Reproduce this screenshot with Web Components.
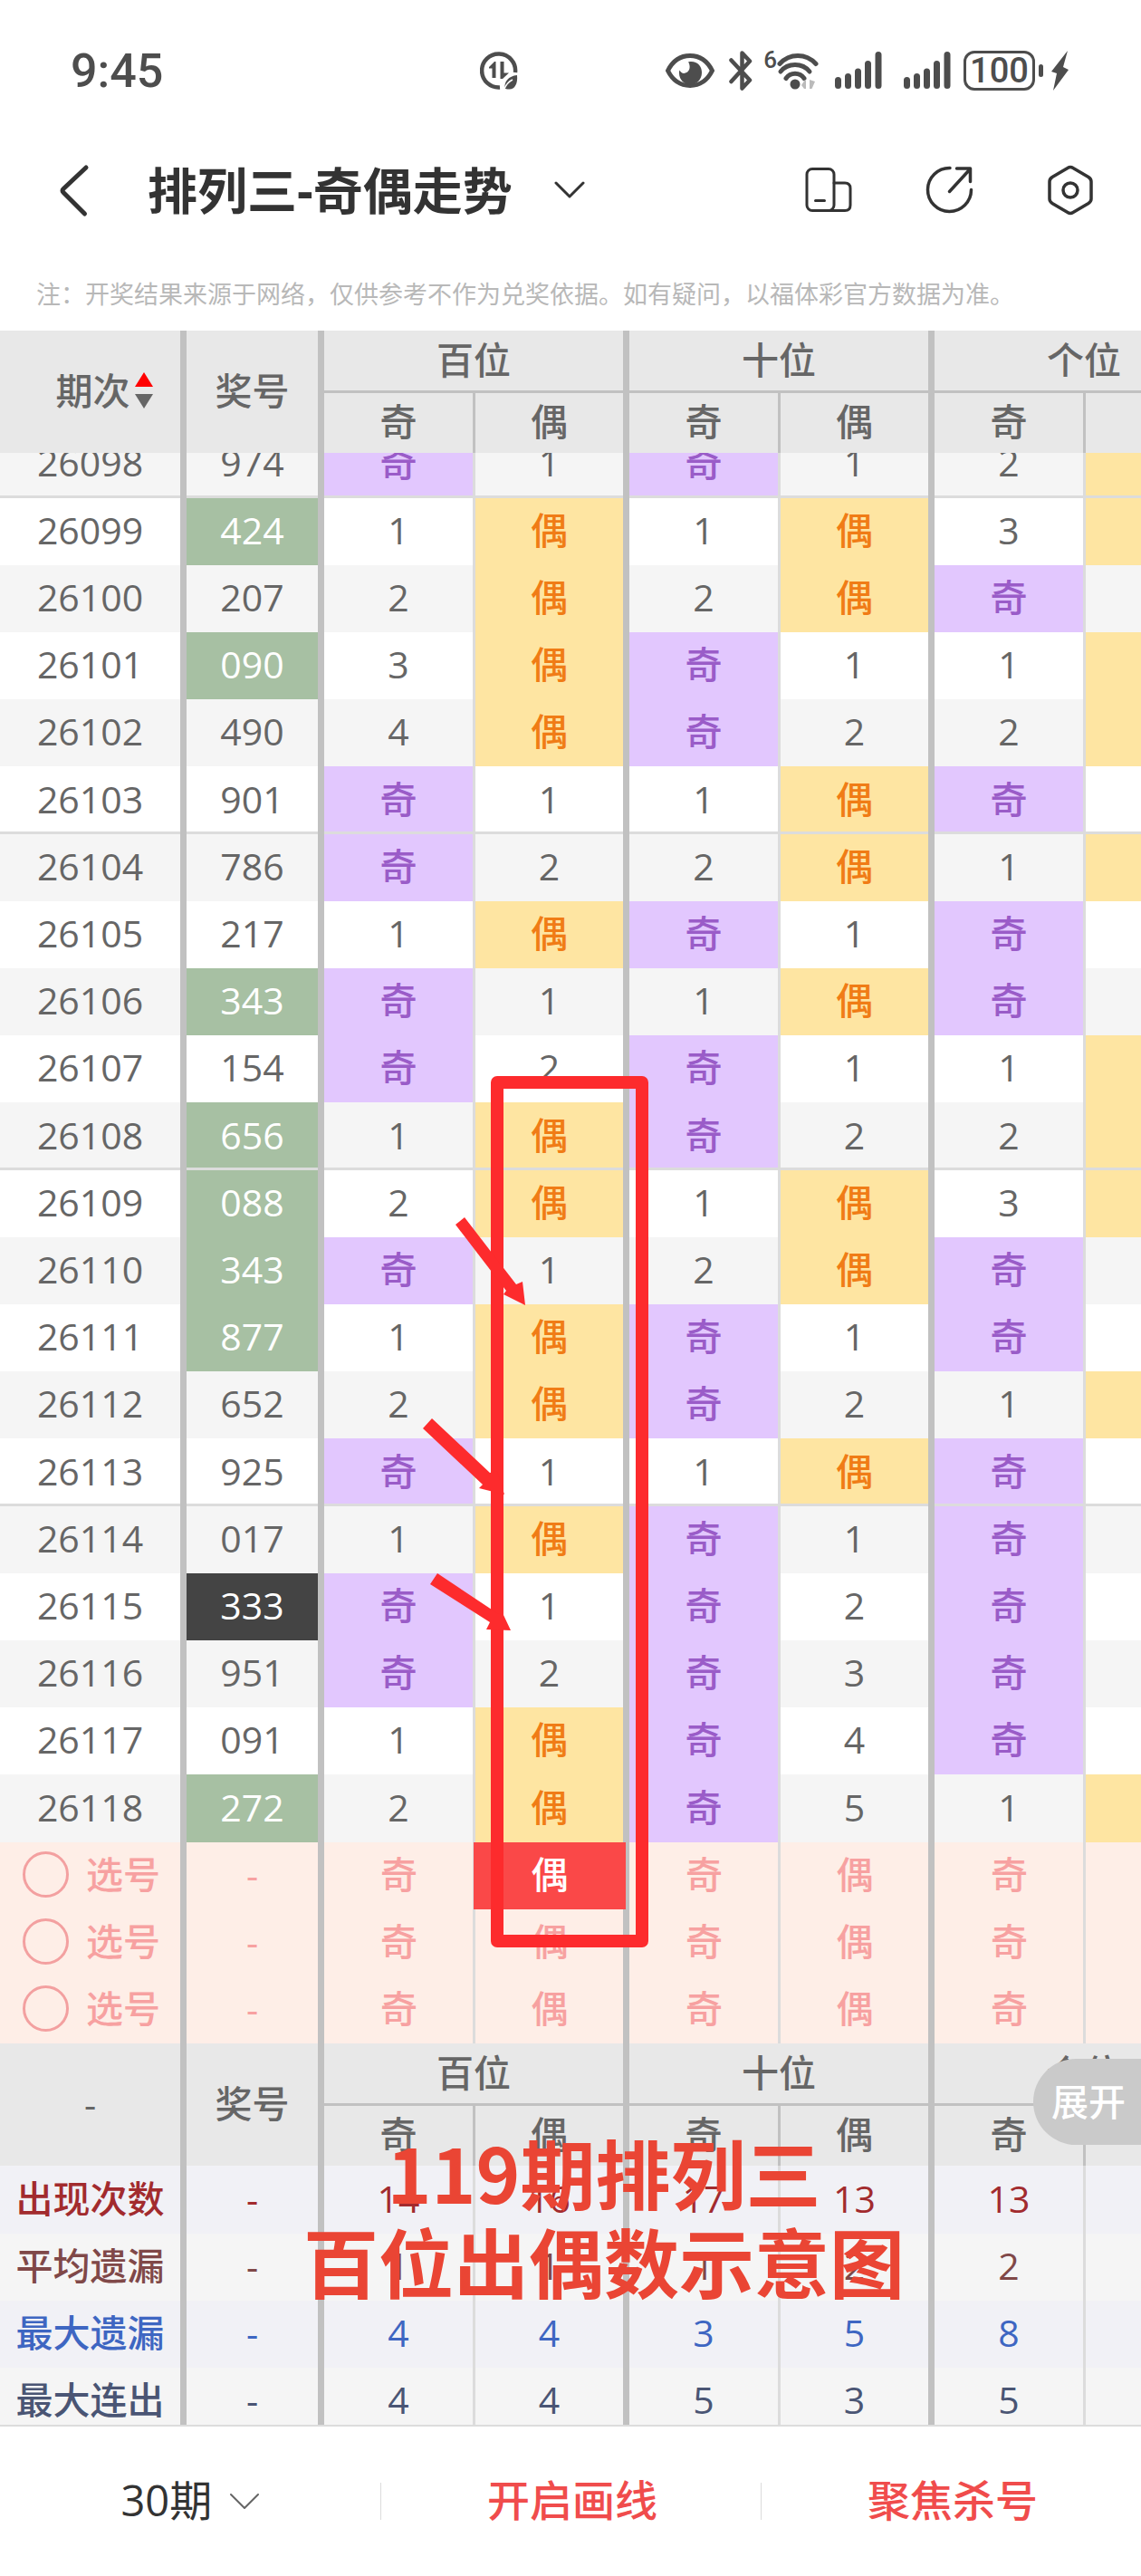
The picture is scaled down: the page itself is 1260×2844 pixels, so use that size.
<!DOCTYPE html>
<html lang="zh-CN">
<head>
<meta charset="utf-8">
<meta name="viewport" content="width=device-width, initial-scale=1">
<title>排列三-奇偶走势</title>
<style>
  body {
    margin: 0;
    height: 100vh;
    display: flex;
    flex-direction: column;
    background: #fff;
    color: #666;
    font-family: "Open Sans", "Noto Sans CJK SC", sans-serif;
    font-size: 41px;
  }

  trend-view {
    flex: 1;
    min-height: 0;
  }
</style>
</head>
<body>
  <status-bar time="9:45" battery="100"></status-bar>
  <page-header>排列三-奇偶走势</page-header>
  <page-note>注：开奖结果来源于网络，仅供参考不作为兑奖依据。如有疑问，以福体彩官方数据为准。</page-note>
  <trend-view>
    <trend-table></trend-table>
    <draw-layer slot="over"></draw-layer>
    <expand-button slot="over">展开</expand-button>
    <draw-caption slot="over">119期排列三<br>百位出偶数示意图</draw-caption>
  </trend-view>
  <tool-bar></tool-bar>

<script>
const icons = {
  saver: [42, 42, `
    <path d="M39 23A18.500 18.500 0 1 0 22 39.400" fill="none" stroke="currentColor" stroke-width="4.500"/>
    <path d="M10 17l6-6h1.500v18h-4V18.500H10zM22.500 11h4v12.500H32L25 30h-2.500z" fill="currentColor"/>
    <path d="M41 26c1 10-3 16-9 15.500-2 0-4-.5-4.500-.5-1-8 4-14 13.500-15z" fill="currentColor"/>
    <path d="M27 41c2-5 5-8 9-10" fill="none" stroke="#fff" stroke-width="1.500"/>`],
  eye: [54, 42, `
    <path d="M2.500 21C8 10 16 4.500 27 4.500S46 10 51.500 21C46 32 38 37.500 27 37.500S8 32 2.500 21z" fill="none" stroke="currentColor" stroke-width="5"/>
    <path d="M25 11.500c9-2 15 4 15 11.500 0 8-6 13.500-12.500 13.500S15 31 15 24c0-1.500 0-2.500.5-3.500 1.500 3 4 4 6.500 3 4-1.500 5-5 4.500-8-.2-2-.7-3-1.500-4z" fill="currentColor"/>`],
  bluetooth: [26, 44, `
    <path d="M2.500 10.500L23 32.500 14.500 41.500V2.500L23 11.500 2.500 34" fill="none" stroke="currentColor" stroke-width="4.500" stroke-linejoin="round" stroke-linecap="round"/>`],
  wifi: [46, 44, `
    <path d="M3 14.500C14 2.500 32 2.500 43 14.500" fill="none" stroke="currentColor" stroke-width="5" stroke-linecap="round"/>
    <path d="M4 23C12 13 28 13 36 23M10 30.500c5-7 15-7 20 0" fill="none" stroke="currentColor" stroke-width="5" stroke-linecap="round"/>
    <circle cx="20" cy="37" r="5.500" fill="currentColor"/>
    <path d="M32 32v10h-2l-3-4 4-6zM36 32l6 2-3.500 8H36z" fill="#bbb"/>`],
  signal: [52, 44, `
    <path d="M3.500 32.500V38.500M14.500 28.500V38.500M25.500 23V38.500M36.500 14.500V38.500M48 4.500V38.500" fill="none" stroke="currentColor" stroke-width="7" stroke-linecap="round"/>`],
  bolt: [20, 44, `
    <path d="M19 0L1 23l6 2-4 19L20 21l-6-3z" fill="currentColor"/>`],
  back: [36, 60, `
    <path d="M31 5L6 28.500Q4 30.500 6 32.500L29.500 56" fill="none" stroke="currentColor" stroke-width="5" stroke-linecap="round"/>`],
  down: [34, 20, `
    <path d="M2 2l15 15L32 2" fill="none" stroke="currentColor" stroke-width="var(--stroke, 3)" stroke-linecap="round" stroke-linejoin="round"/>`],
  rooms: [54, 56, `
    <g fill="none" stroke="currentColor" stroke-width="3" stroke-linecap="round">
      <rect x="3" y="4.500" width="30" height="46" rx="6"/>
      <path d="M33 20h12q6 0 6 6v18.500q0 6-6 6H27M12.500 39.500h10"/>
    </g>`],
  share: [54, 56, `
    <g fill="none" stroke="currentColor" stroke-width="3.500" stroke-linecap="round" stroke-linejoin="round">
      <path d="M27 3.500A24 24 0 1 0 50.500 27.500"/>
      <path d="M26.500 29.500L49 5M34.500 4H49.500V18.500"/>
    </g>`],
  settings: [52, 56, `
    <path d="M23 3.500q3-2 6 0l17 10q3 2 3 5v19q0 3-3 5l-17 10q-3 2-6 0l-17-10q-3-2-3-5v-19q0-3 3-5z" fill="none" stroke="currentColor" stroke-width="3.500"/>
    <circle cx="26" cy="28" r="8" fill="none" stroke="currentColor" stroke-width="3.500"/>`],
};

class UiIcon extends HTMLElement {
  constructor() {
    super();
    this.attachShadow({ mode: 'open' });
  }

  connectedCallback() {
    const [w, h, shape] = icons[this.getAttribute('name')];
    this.shadowRoot.innerHTML = `
      <style>
        :host { display: inline-flex; flex: none; }
      </style>
      <svg width="${w}" height="${h}" viewBox="0 0 ${w} ${h}" aria-hidden="true">${shape}</svg>
    `;
  }
}

class StatusBar extends HTMLElement {
  constructor() {
    super();
    this.attachShadow({ mode: 'open' });
  }

  connectedCallback() {
    this.shadowRoot.innerHTML = `
      <style>
        :host {
          display: flex;
          align-items: center;
          height: 156px;
          padding: 0 80px 0 78px;
          color: #4d4d4d;
          font-family: Roboto, sans-serif;
          font-weight: 500;
        }
        .time { font-size: 52px; flex: 1; display: flex; align-items: center; }
        .icons { display: flex; align-items: center; gap: 16px; }
        .saver { margin-left: 350px; }
        .wifi { display: flex; align-items: flex-start; margin: 0 2px 0 -4px; }
        .wifi span { font-size: 26px; line-height: 20px; }
        .signal { margin-right: 8px; }
        .battery { display: flex; align-items: center; margin-left: -10px; }
        .level {
          box-sizing: border-box;
          width: 79px;
          height: 44px;
          border: 3px solid;
          border-radius: 12px;
          text-align: center;
          font-size: 38px;
          line-height: 39px;
        }
        .cap { width: 5px; height: 14px; margin-left: 4px; border-radius: 3px; background: currentColor; }
        .bolt { margin-left: -8px; }
      </style>
      <div class="time">${this.getAttribute('time')}<ui-icon class="saver" name="saver"></ui-icon></div>
      <div class="icons">
        <ui-icon name="eye"></ui-icon>
        <ui-icon name="bluetooth"></ui-icon>
        <div class="wifi"><span>6</span><ui-icon name="wifi"></ui-icon></div>
        <ui-icon class="signal" name="signal"></ui-icon>
        <ui-icon class="signal" name="signal"></ui-icon>
        <div class="battery"><div class="level">${this.getAttribute('battery')}</div><div class="cap"></div></div>
        <ui-icon class="bolt" name="bolt"></ui-icon>
      </div>
    `;
  }
}

class PageHeader extends HTMLElement {
  constructor() {
    super();
    this.attachShadow({ mode: 'open' });
    this.shadowRoot.innerHTML = `
      <style>
        :host {
          display: flex;
          align-items: center;
          height: 108px;
          padding: 0 52px 0 64px;
          color: #333;
        }
        button {
          display: inline-flex;
          align-items: center;
          padding: 0;
          border: 0;
          background: none;
          color: inherit;
          font: inherit;
          cursor: pointer;
        }
        h1 { flex: 1; margin: 0 0 0 63px; font-size: 55px; line-height: 80px; }
        h1 button { gap: 46px; }
        nav { display: flex; gap: 80px; }
      </style>
      <button aria-label="返回"><ui-icon name="back"></ui-icon></button>
      <h1><button aria-haspopup="true"><slot></slot><ui-icon name="down"></ui-icon></button></h1>
      <nav>
        <button aria-label="布局"><ui-icon name="rooms"></ui-icon></button>
        <button aria-label="分享"><ui-icon name="share"></ui-icon></button>
        <button aria-label="设置"><ui-icon name="settings"></ui-icon></button>
      </nav>
    `;
  }
}

class PageNote extends HTMLElement {
  constructor() {
    super();
    this.attachShadow({ mode: 'open' });
    this.shadowRoot.innerHTML = `
      <style>
        :host {
          display: block;
          padding: 40px 40px 20px;
          color: #b8b8b8;
          font-size: 27px;
          line-height: 41px;
        }
      </style>
      <slot></slot>
    `;
  }
}

class TrendView extends HTMLElement {
  constructor() {
    super();
    this.attachShadow({ mode: 'open' });
    this.shadowRoot.innerHTML = `
      <style>
        :host { display: block; position: relative; overflow: hidden; }
      </style>
      <slot></slot>
      <slot name="over"></slot>
    `;
  }
}

const FIRST_ISSUE = 26098;
const draws = [
  '974', '424', '207', '090', '490', '901', '786', '217', '343', '154', '656',
  '088', '343', '877', '652', '925', '017', '333', '951', '091', '272',
];
const stats = [
  ['出现次数', 'count', [14, 16, 17, 13, 13, '']],
  ['平均遗漏', 'average', [1, 1, 1, 2, 2, '']],
  ['最大遗漏', 'miss', [4, 4, 3, 5, 8, '']],
  ['最大连出', 'streak', [4, 4, 5, 3, 5, '']],
];

// every digit gives two cells: the hit one shows its name, the other how long it has been missing
function drawRows() {
  const missing = [0, 0, 0, 0, 1, 0];
  return draws.map((num, i) => {
    const issue = FIRST_ISSUE + i;
    const kinds = new Set(num).size;
    const mark = kinds === 1 ? 'triple' : kinds === 2 ? 'pair' : '';
    const cells = missing.map((_, col) => {
      const odd = Number(num[col >> 1]) % 2 === 1;
      const hit = odd === (col % 2 === 0);
      missing[col] = hit ? 0 : missing[col] + 1;
      return hit
        ? `<td class="${odd ? 'odd' : 'even'}">${odd ? '奇' : '偶'}</td>`
        : `<td>${missing[col]}</td>`;
    });
    const classes = [i % 2 ? '' : 'shade', issue % 5 === 3 ? 'fifth' : ''].join(' ');
    return `<tr class="${classes}"><td>${issue}</td><td class="${mark}">${num}</td>${cells.join('')}</tr>`;
  }).join('');
}

function pickRows() {
  return [0, 1, 2].map(row => {
    const cells = [0, 1, 2, 3, 4, 5].map(col =>
      `<td><button aria-pressed="${row === 0 && col === 1}">${col % 2 ? '偶' : '奇'}</button></td>`);
    return `
      <tr class="pick">
        <td><label><input type="checkbox">选号</label></td>
        <td>-</td>${cells.join('')}
      </tr>`;
  }).join('');
}

function headRows(first) {
  return `
    <tr class="head">
      <th rowspan="2">${first}</th><th rowspan="2">奖号</th>
      <th colspan="2" class="group">百位</th><th colspan="2" class="group">十位</th><th colspan="2" class="group">个位</th>
    </tr>
    <tr class="head sub">${'<th>奇</th><th>偶</th>'.repeat(3)}</tr>`;
}

function statRows() {
  return stats.map(([name, cls, values]) =>
    `<tr class="stat ${cls}"><td>${name}</td><td>-</td>${values.map(v => `<td>${v}</td>`).join('')}</tr>`).join('');
}

class TrendTable extends HTMLElement {
  constructor() {
    super();
    this.attachShadow({ mode: 'open' });
    this.shadowRoot.innerHTML = `
      <style>
        :host { display: block; }
        table {
          width: 1369px;
          table-layout: fixed;
          border-spacing: 0;
          text-align: center;
          line-height: 60px;
        }
        .issue { width: 206px; }
        .prize { width: 152px; }
        .c-odd { width: 167px; }
        .c-even { width: 170px; }

        th, td {
          box-sizing: border-box;
          height: 74px;
          padding: 0 0 4px;
          border-right: 7px solid #c1c1c1;
          font-weight: 500;
        }
        td:nth-child(n + 3):nth-child(odd) { border-right: 3px solid #dcdcdc; }
        .sub th:nth-child(odd) { border-right: 3px solid #c1c1c1; }

        .head th { height: 66px; background: #e8e8e8; }
        .head .group { height: 69px; padding-bottom: 6px; box-shadow: inset 0 -3px #c1c1c1; }
        .sort { display: flex; align-items: center; justify-content: center; gap: 5px; padding-left: 31px; }

        .shade td { background: #f5f5f5; }
        .fifth td { height: 75px; box-shadow: inset 0 -3px #dcdcdc; }
        .fifth.last td { box-shadow: none; }
        /* the oldest row is scrolled halfway under the header */
        .top td { height: 50px; padding: 0; vertical-align: top; }
        .top div { height: 47px; overflow: hidden; display: flex; justify-content: center; align-items: flex-end; }
        .top span { line-height: 74px; }

        td.pair { background: #a7c0a3; color: #fff; }
        td.triple { background: #444; color: #fff; }
        td.odd { background: #e2c7fe; color: #9a5cc8; }
        td.even { background: #fee5a2; color: #f07c16; }

        .pick td { background: #feeee7; color: #f7a1a1; }
        .pick td:nth-child(n + 3) { padding: 0; }
        .pick label { display: flex; align-items: center; gap: 19px; padding-left: 25px; }
        .pick input {
          appearance: none;
          box-sizing: border-box;
          width: 51px;
          height: 51px;
          margin: 0;
          border: 3px solid #f3a0a0;
          border-radius: 50%;
        }
        .pick button {
          display: block;
          position: relative;
          width: calc(100% + 5px);
          height: 74px;
          margin: 0 -3px 0 -2px;
          padding: 0 0 4px;
          border: 0;
          background: none;
          color: inherit;
          font: inherit;
        }
        .pick button[aria-pressed="true"] { background: #fa4848; color: #fff; }

        .stat:nth-child(odd) td { background: #f1f1f6; }
        .stat:nth-child(even) td { background: #f5f5f5; }
        .count td { height: 75px; color: #a22b2e; }
        .average td { color: #804848; }
        .miss td { color: #3e66c2; }
        .streak td { color: #4a5574; }
      </style>
      <table>
        <colgroup>
          <col class="issue"><col class="prize">
          <col class="c-odd"><col class="c-even"><col class="c-odd"><col class="c-even"><col class="c-odd"><col class="c-even">
        </colgroup>
        <thead>
          ${headRows(`<div class="sort">期次
            <svg width="20" height="40" viewBox="0 0 20 40"><path d="M10 0l10 16H0z" fill="red"/><path d="M10 40L0 24h20z" fill="#666"/></svg>
          </div>`)}
        </thead>
        <tbody class="draws">${drawRows()}</tbody>
        <tbody>${pickRows()}</tbody>
        <tbody>${headRows('-')}</tbody>
        <tbody>${statRows()}</tbody>
      </table>
    `;

    const rows = this.shadowRoot.querySelectorAll('.draws tr');
    rows[0].classList.add('top');
    rows[rows.length - 1].classList.add('last');
    rows[0].querySelectorAll('td').forEach(td => {
      td.innerHTML = `<div><span>${td.textContent}</span></div>`;
    });
    this.shadowRoot.querySelectorAll('.pick button').forEach(button => {
      button.addEventListener('click', () => {
        button.setAttribute('aria-pressed', button.getAttribute('aria-pressed') !== 'true');
      });
    });
  }
}

// what the user has drawn over the table
class DrawLayer extends HTMLElement {
  constructor() {
    super();
    this.attachShadow({ mode: 'open' });
    this.shadowRoot.innerHTML = `
      <style>
        :host { position: absolute; top: 0; left: 0; pointer-events: none; }
        svg { display: block; overflow: visible; }
      </style>
      <svg width="760" height="1800" viewBox="0 0 760 1800" fill="#fd2b2d" aria-hidden="true">
        <rect x="549" y="830" width="160" height="948" fill="none" stroke="#fd2b2d" stroke-width="14" stroke-linejoin="round"/>
        <path d="M503 987l10-8 57 74 7-3 3 26-24-12 3-4z"/>
        <path d="M467 1212l10-11 64 60 8-2 8 26-28-7 4-4z"/>
        <path d="M475 1384l8-12 66 44 7 2 8 17-27-1 4-8z"/>
      </svg>
    `;
  }
}

class DrawCaption extends HTMLElement {
  constructor() {
    super();
    this.attachShadow({ mode: 'open' });
    this.shadowRoot.innerHTML = `
      <style>
        :host {
          position: absolute;
          bottom: 133px;
          left: 335px;
          color: #ea4534;
          font: 700 83px/98px "Noto Sans CJK SC", sans-serif;
          text-align: center;
          white-space: nowrap;
        }
      </style>
      <slot></slot>
    `;
  }
}

class ExpandButton extends HTMLElement {
  constructor() {
    super();
    this.attachShadow({ mode: 'open' });
    this.shadowRoot.innerHTML = `
      <style>
        :host { position: absolute; right: 0; bottom: 309px; }
        button {
          display: block;
          height: 95px;
          padding: 0 17px 5px 20px;
          border: 0;
          border-radius: 48px 0 0 48px;
          background: #cacaca;
          color: #fff;
          font: inherit;
          font-weight: 500;
          cursor: pointer;
        }
      </style>
      <button><slot></slot></button>
    `;
  }
}

class ToolBar extends HTMLElement {
  constructor() {
    super();
    this.attachShadow({ mode: 'open' });
    this.shadowRoot.innerHTML = `
      <style>
        :host {
          display: grid;
          grid-template-columns: repeat(3, 1fr);
          align-items: center;
          height: 165px;
          border-top: 2px solid #dcdcdc;
          font-size: 47px;
        }
        .item {
          display: flex;
          align-items: center;
          justify-content: center;
          gap: 18px;
          height: 41px;
        }
        .item + .item { border-left: 1px solid #dcdcdc; }
        .range { color: #666; --stroke: 2; }
        select, button {
          appearance: none;
          padding: 0 0 3px;
          border: 0;
          background: none;
          font: inherit;
          line-height: 70px;
          cursor: pointer;
        }
        select { color: #333; }
        button { padding-left: 3px; color: #f04c4c; font-weight: 500; }
      </style>
      <label class="item range">
        <select aria-label="期数"><option>30期</option><option>50期</option></select>
        <ui-icon name="down"></ui-icon>
      </label>
      <div class="item"><button>开启画线</button></div>
      <div class="item"><button>聚焦杀号</button></div>
    `;
  }
}

customElements.define('ui-icon', UiIcon);
customElements.define('status-bar', StatusBar);
customElements.define('page-header', PageHeader);
customElements.define('page-note', PageNote);
customElements.define('trend-view', TrendView);
customElements.define('trend-table', TrendTable);
customElements.define('draw-layer', DrawLayer);
customElements.define('draw-caption', DrawCaption);
customElements.define('expand-button', ExpandButton);
customElements.define('tool-bar', ToolBar);
</script>
</body>
</html>
